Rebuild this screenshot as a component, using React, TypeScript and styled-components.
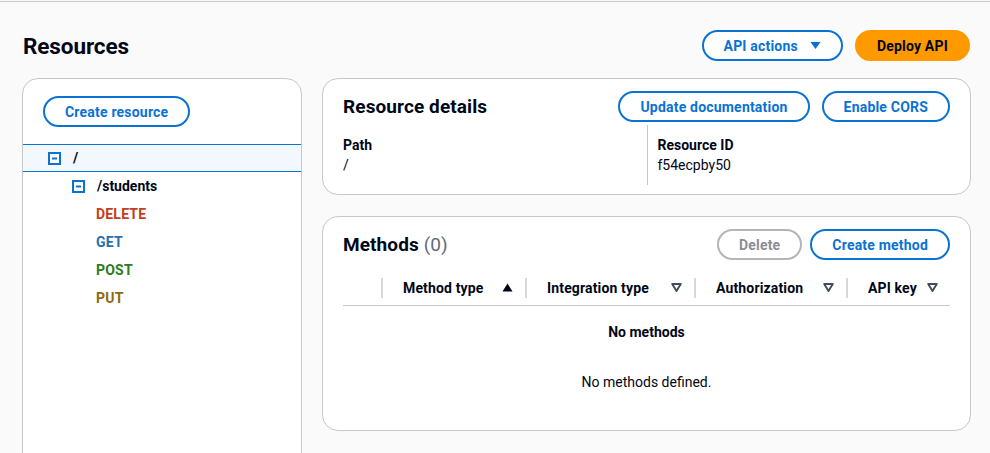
import React from "react";
import styled, { createGlobalStyle } from "styled-components";

const GlobalStyle = createGlobalStyle`
  html, body { margin: 0; padding: 0; background: #fafafa; }
  body { font-family: Roboto, "Open Sans", "Liberation Sans", sans-serif; color: #000716; font-size: 14px; }
  * { box-sizing: border-box; }
`;

const Page = styled.div`
  min-height: 453px;
  padding-top: 1px;
  background: #fafafa;
  overflow: hidden;
`;

const TopRule = styled.div`
  height: 1px;
  background: #c6c6cd;
`;

const Header = styled.div`
  display: flex;
  align-items: center;
  justify-content: space-between;
  padding: 28px 20px 0 23px;
`;

const Title = styled.h1`
  margin: 0;
  font-size: 22.5px;
  font-weight: 700;
  letter-spacing: -0.1px;
`;

const Actions = styled.div<{ $gap?: number }>`
  display: flex;
  gap: ${(p) => p.$gap ?? 12}px;
`;

const Button = styled.button<{ $variant?: "normal" | "primary" | "disabled" }>`
  display: inline-flex;
  align-items: center;
  gap: 12px;
  height: 31px;
  padding: 0 20px;
  border-radius: 16px;
  font-family: inherit;
  font-size: 14px;
  font-weight: 700;
  letter-spacing: 0.2px;
  cursor: pointer;
  white-space: nowrap;
  border: 2px solid
    ${(p) => (p.$variant === "primary" ? "#ff9900" : p.$variant === "disabled" ? "#b4b4bb" : "#0972d3")};
  background: ${(p) => (p.$variant === "primary" ? "#ff9900" : "#ffffff")};
  color: ${(p) => (p.$variant === "primary" ? "#000716" : p.$variant === "disabled" ? "#8c8c94" : "#0972d3")};
`;

const Main = styled.div`
  display: grid;
  grid-template-columns: 280px 1fr;
  gap: 20px;
  padding: 17px 19px 0 22px;
`;

const Panel = styled.div`
  background: #ffffff;
  border: 1px solid #c6c6cd;
  border-radius: 16px;
`;

const LeftPanel = styled(Panel)`
  min-height: 420px;
  padding-top: 17px;
`;

const LeftButtonWrap = styled.div`
  padding: 0 20px;
  margin-bottom: 17px;
`;

const Tree = styled.div`
  display: flex;
  flex-direction: column;
`;

const TreeRow = styled.div<{ $level: number; $selected?: boolean }>`
  display: flex;
  align-items: center;
  gap: 12px;
  height: 28px;
  padding-left: ${(p) => 25 + p.$level * 24}px;
  font-weight: 700;
  font-size: 14px;
  border-top: 1px solid ${(p) => (p.$selected ? "#0972d3" : "transparent")};
  border-bottom: 1px solid ${(p) => (p.$selected ? "#0972d3" : "transparent")};
  background: ${(p) => (p.$selected ? "#f2f8fd" : "transparent")};
`;

const MethodLabel = styled.span<{ $color: string }>`
  color: ${(p) => p.$color};
  font-weight: 700;
  letter-spacing: 0.2px;
`;

const Column = styled.div`
  display: flex;
  flex-direction: column;
  gap: 21px;
`;

const CardHead = styled.div`
  display: flex;
  align-items: center;
  justify-content: space-between;
`;

const CardTitle = styled.h2`
  margin: 0;
  font-size: 19px;
  font-weight: 700;
  letter-spacing: 0.1px;
`;

const Count = styled.span`
  font-weight: 400;
  color: #5f6b7a;
`;

const DetailsCard = styled(Panel)`
  padding: 12px 20px 9px 20px;
`;

const DetailsGrid = styled.div`
  display: grid;
  grid-template-columns: 1fr 1fr;
  margin-top: 3px;
`;

const DetailCell = styled.div<{ $divider?: boolean }>`
  padding: 10px 0 10px ${(p) => (p.$divider ? "10px" : "0")};
  border-left: ${(p) => (p.$divider ? "1px solid #c6c6cd" : "none")};
  line-height: 20px;
`;

const Label = styled.div`
  font-weight: 700;
`;

const MethodsCard = styled(Panel)`
  padding: 12px 20px 0 20px;
  min-height: 215px;
`;

const TableHead = styled.div`
  display: grid;
  grid-template-columns: 38px 144px 169px 152px 1fr;
  height: 36px;
  margin-top: 10px;
  border-bottom: 1px solid #c6c6cd;
  align-items: center;
`;

const Th = styled.div`
  display: flex;
  align-items: center;
  justify-content: space-between;
  height: 20px;
  padding: 0 12px 0 20px;
  border-left: 2px solid #d5d7db;
  font-weight: 700;
  letter-spacing: 0.15px;
  white-space: nowrap;
`;

const Empty = styled.div`
  display: flex;
  flex-direction: column;
  align-items: center;
  padding-top: 16px;
  line-height: 20px;
`;

const EmptyTitle = styled.div`
  font-weight: 700;
`;

const EmptyText = styled.div`
  margin-top: 30px;
`;

const TreeIcon = () => (
  <svg width="13" height="13" viewBox="0 0 13 13">
    <rect x="1" y="1" width="11" height="11" fill="#fff" stroke="#0972d3" strokeWidth="2" />
    <line x1="4" y1="6.5" x2="9" y2="6.5" stroke="#0972d3" strokeWidth="2" />
  </svg>
);

const CaretDown = () => (
  <svg width="11" height="9" viewBox="0 0 11 9">
    <polygon points="0.5,1 10.5,1 5.5,8" fill="#0972d3" />
  </svg>
);

const SortUp = () => (
  <svg width="11" height="9" viewBox="0 0 11 9">
    <polygon points="5.5,0.5 10.5,8.5 0.5,8.5" fill="#000716" />
  </svg>
);

const SortNone = () => (
  <svg width="11" height="9" viewBox="0 0 11 9">
    <polygon points="1.2,1 9.8,1 5.5,8" fill="none" stroke="#414d5c" strokeWidth="1.9" strokeLinejoin="round" />
  </svg>
);

const methods = [
  { name: "DELETE", color: "#c3401c" },
  { name: "GET", color: "#2a6fad" },
  { name: "POST", color: "#2b7b1c" },
  { name: "PUT", color: "#8c6a12" },
];

export default function App() {
  return (
    <>
      <GlobalStyle />
      <Page>
        <TopRule />
        <Header>
          <Title>Resources</Title>
          <Actions>
            <Button>
              API actions <CaretDown />
            </Button>
            <Button $variant="primary">Deploy API</Button>
          </Actions>
        </Header>
        <Main>
          <LeftPanel>
            <LeftButtonWrap>
              <Button>Create resource</Button>
            </LeftButtonWrap>
            <Tree>
              <TreeRow $level={0} $selected>
                <TreeIcon />
                <span>/</span>
              </TreeRow>
              <TreeRow $level={1}>
                <TreeIcon />
                <span>/students</span>
              </TreeRow>
              {methods.map((m) => (
                <TreeRow key={m.name} $level={2}>
                  <MethodLabel $color={m.color}>{m.name}</MethodLabel>
                </TreeRow>
              ))}
            </Tree>
          </LeftPanel>
          <Column>
            <DetailsCard>
              <CardHead>
                <CardTitle>Resource details</CardTitle>
                <Actions>
                  <Button>Update documentation</Button>
                  <Button>Enable CORS</Button>
                </Actions>
              </CardHead>
              <DetailsGrid>
                <DetailCell>
                  <Label>Path</Label>
                  <div>/</div>
                </DetailCell>
                <DetailCell $divider>
                  <Label>Resource ID</Label>
                  <div>f54ecpby50</div>
                </DetailCell>
              </DetailsGrid>
            </DetailsCard>
            <MethodsCard>
              <CardHead>
                <CardTitle>
                  Methods <Count>(0)</Count>
                </CardTitle>
                <Actions $gap={8}>
                  <Button $variant="disabled">Delete</Button>
                  <Button>Create method</Button>
                </Actions>
              </CardHead>
              <TableHead>
                <div />
                <Th>
                  Method type <SortUp />
                </Th>
                <Th>
                  Integration type <SortNone />
                </Th>
                <Th>
                  Authorization <SortNone />
                </Th>
                <Th>
                  API key <SortNone />
                </Th>
              </TableHead>
              <Empty>
                <EmptyTitle>No methods</EmptyTitle>
                <EmptyText>No methods defined.</EmptyText>
              </Empty>
            </MethodsCard>
          </Column>
        </Main>
      </Page>
    </>
  );
}
